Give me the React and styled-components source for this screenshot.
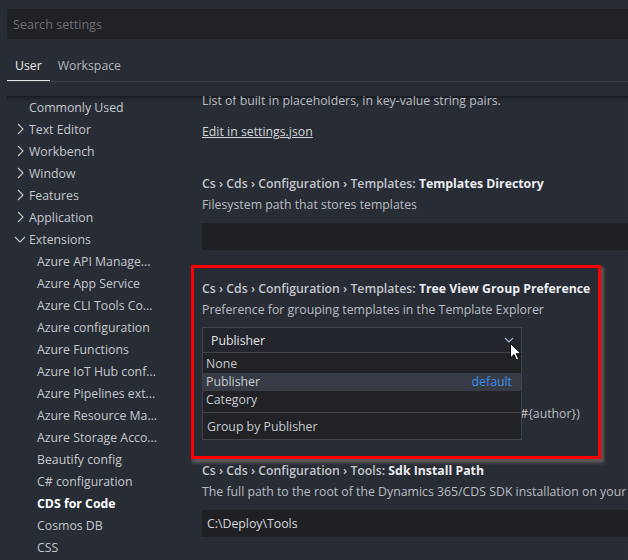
import React from 'react';
import styled, { createGlobalStyle } from 'styled-components';

// --- Global ---

const GlobalStyle = createGlobalStyle`
  html, body {
    margin: 0;
    padding: 0;
    background: #282c34;
  }
  body {
    font-family: "Open Sans", "Noto Sans", sans-serif;
    font-size: 12.3px;
    color: #c5c8ce;
  }
`;

// --- Styled Components ---

const Page = styled.div`
  width: 628px;
  height: 560px;
  overflow: hidden;
  display: flex;
  flex-direction: column;
`;

const Header = styled.div`
  padding: 9px 0 0 7px;
`;

const SearchInput = styled.input`
  display: block;
  box-sizing: border-box;
  width: 100%;
  height: 30px;
  border: none;
  outline: none;
  background: #202125;
  padding: 0 6px;
  font-family: inherit;
  font-size: 12.6px;
  color: #d0d3d8;

  &::placeholder {
    color: #6c7078;
  }
`;

const TabBar = styled.div`
  display: flex;
  border-bottom: 1px solid #3c3f48;
`;

const Tab = styled.div`
  padding: 18px 8px 5px;
  line-height: 18px;
  font-size: 12.3px;
  color: ${p => (p.$active ? '#e8e8e8' : '#b4b8bf')};
  border-bottom: 1px solid ${p => (p.$active ? '#e8e8e8' : 'transparent')};
`;

const Body = styled.div`
  flex: 1;
  display: flex;
  margin: 14px 0 0 7px;
  overflow: hidden;
  box-shadow: inset 0 6px 5px -5px #111318;
`;

const Sidebar = styled.div`
  width: 184px;
  flex-shrink: 0;
`;

const NavRow = styled.div`
  display: flex;
  align-items: center;
  height: 22px;
  padding-left: ${p => p.$indent}px;
  font-size: 12.3px;
  color: ${p => (p.$bold ? '#ffffff' : '#c5c8ce')};
  font-weight: ${p => (p.$bold ? 700 : 400)};
  white-space: nowrap;

  svg {
    flex-shrink: 0;
    margin-right: 1px;
  }
`;

const Content = styled.div`
  flex: 1;
  position: relative;
  overflow: hidden;
`;

const ContentInner = styled.div`
  margin-top: -4px;
  width: 720px;
`;

const Setting = styled.div`
  position: relative;
  padding: ${p => p.$pt ?? 12}px 11px ${p => p.$pb ?? 18}px;
  white-space: nowrap;
`;

const Title = styled.div`
  line-height: 18px;
  font-weight: 600;
  color: #c3c6cc;

  b {
    font-weight: 700;
    color: #eceef1;
  }
`;

const Desc = styled.div`
  margin-top: ${p => (p.$first ? 0 : 3)}px;
  line-height: 18px;
  color: #babdc3;
`;

const EditLink = styled.a`
  display: inline-block;
  margin-top: 13px;
  line-height: 18px;
  color: #d3d6db;
  text-decoration: underline;
  cursor: pointer;
`;

const TextInput = styled.div`
  margin-top: 9px;
  box-sizing: border-box;
  width: 600px;
  height: 27px;
  line-height: 27px;
  padding-left: 5px;
  background: #1f2024;
  color: #d6d8dc;
`;

const SelectWrap = styled.div`
  position: relative;
  margin-top: 8px;
  width: 320px;
`;

const SelectBox = styled.div`
  box-sizing: border-box;
  height: 26px;
  display: flex;
  align-items: center;
  justify-content: space-between;
  padding: 0 7px 0 8px;
  background: #22252b;
  border: 1px solid #40434b;
  color: #e2e4e8;
`;

const Dropdown = styled.div`
  position: absolute;
  top: 100%;
  left: 0;
  width: 320px;
  box-sizing: border-box;
  background: #202226;
  border: 1px solid #40434b;
  border-top: none;
  padding-top: 2px;
  z-index: 2;
`;

const Option = styled.div`
  display: flex;
  justify-content: space-between;
  height: 18px;
  line-height: 18px;
  padding: 0 9px 0 3px;
  color: #c8cbd0;
  background: ${p => (p.$selected ? '#363b46' : 'transparent')};
`;

const DefaultTag = styled.span`
  color: #3b8eea;
`;

const OptionDesc = styled.div`
  margin-top: 3px;
  border-top: 1px solid #40434b;
  padding: 5px 4px 3px;
  line-height: 18px;
  color: #c8cbd0;
`;

const Cursor = styled.svg`
  position: absolute;
  left: 308px;
  top: 16px;
  z-index: 3;
`;

const Annotation = styled.div`
  position: absolute;
  left: 0;
  top: -3px;
  width: 410px;
  height: 194px;
  box-sizing: border-box;
  border: 3px solid #ff0000;
  box-shadow: 2px 3px 3px 1px rgba(95, 95, 95, 0.9);
  pointer-events: none;
  z-index: 4;
`;

// --- Icons ---

const Chevron = ({ open }) => (
  <svg width="16" height="16" viewBox="0 0 16 16">
    <path
      d={open ? 'M3 6 L8 11 L13 6' : 'M6 3 L11 8 L6 13'}
      fill="none"
      stroke="#c5c8ce"
      strokeWidth="1.1"
    />
  </svg>
);

// --- Data ---

const navItems = [
  { label: 'Commonly Used', indent: 22 },
  { label: 'Text Editor', icon: 'closed' },
  { label: 'Workbench', icon: 'closed' },
  { label: 'Window', icon: 'closed' },
  { label: 'Features', icon: 'closed' },
  { label: 'Application', icon: 'closed' },
  { label: 'Extensions', icon: 'open' },
  { label: 'Azure API Manage...', indent: 30 },
  { label: 'Azure App Service', indent: 30 },
  { label: 'Azure CLI Tools Co...', indent: 30 },
  { label: 'Azure configuration', indent: 30 },
  { label: 'Azure Functions', indent: 30 },
  { label: 'Azure IoT Hub conf...', indent: 30 },
  { label: 'Azure Pipelines ext...', indent: 30 },
  { label: 'Azure Resource Ma...', indent: 30 },
  { label: 'Azure Storage Acco...', indent: 30 },
  { label: 'Beautify config', indent: 30 },
  { label: 'C# configuration', indent: 30 },
  { label: 'CDS for Code', indent: 30, bold: true },
  { label: 'Cosmos DB', indent: 30 },
  { label: 'CSS', indent: 30 },
];

const options = [
  { label: 'None' },
  { label: 'Publisher', selected: true, isDefault: true },
  { label: 'Category' },
];

// --- Component ---

function App() {
  return (
    <>
      <GlobalStyle />
      <Page>
        <Header>
          <SearchInput placeholder="Search settings" />
          <TabBar>
            <Tab $active>User</Tab>
            <Tab>Workspace</Tab>
          </TabBar>
        </Header>

        <Body>
          <Sidebar>
            {navItems.map(item => (
              <NavRow key={item.label} $indent={item.icon ? 5 : item.indent} $bold={item.bold}>
                {item.icon && <Chevron open={item.icon === 'open'} />}
                {item.label}
              </NavRow>
            ))}
          </Sidebar>

          <Content>
            <ContentInner>
              <Setting $pt={0} $pb={22}>
                <Desc $first>List of built in placeholders, in key-value string pairs.</Desc>
                <EditLink>Edit in settings.json</EditLink>
              </Setting>

              <Setting>
                <Title>Cs › Cds › Configuration › Templates: <b>Templates Directory</b></Title>
                <Desc>Filesystem path that stores templates</Desc>
                <TextInput />
              </Setting>

              <Setting>
                <Annotation />
                <Title>Cs › Cds › Configuration › Templates: <b>Tree View Group Preference</b></Title>
                <Desc>Preference for grouping templates in the Template Explorer</Desc>
                <SelectWrap>
                  <SelectBox>
                    <span>Publisher</span>
                    <svg width="10" height="6" viewBox="0 0 10 6">
                      <path d="M1 1 L5 5 L9 1" fill="none" stroke="#a9bcd6" strokeWidth="1.1" />
                    </svg>
                  </SelectBox>
                  <Dropdown>
                    {options.map(opt => (
                      <Option key={opt.label} $selected={opt.selected}>
                        <span>{opt.label}</span>
                        {opt.isDefault && <DefaultTag>default</DefaultTag>}
                      </Option>
                    ))}
                    <OptionDesc>Group by Publisher</OptionDesc>
                  </Dropdown>
                  <Cursor width="12" height="18" viewBox="0 0 12 18">
                    <path
                      d="M0.5 0.5 L0.5 15 L4 11.6 L6.6 17.2 L8.8 16.2 L6.3 10.7 L11 10.7 Z"
                      fill="#ffffff"
                      stroke="#000000"
                      strokeWidth="1"
                      strokeLinejoin="miter"
                    />
                  </Cursor>
                </SelectWrap>
              </Setting>

              <Setting $pt={34} $pb={27}>
                <Desc $first>Default placeholder values for templates (e.g. Creators: #{'{author}'})</Desc>
              </Setting>

              <Setting>
                <Title>Cs › Cds › Configuration › Tools: <b>Sdk Install Path</b></Title>
                <Desc>The full path to the root of the Dynamics 365/CDS SDK installation on your machine</Desc>
                <TextInput>C:\Deploy\Tools</TextInput>
              </Setting>
            </ContentInner>
          </Content>
        </Body>
      </Page>
    </>
  );
}

export default App;
